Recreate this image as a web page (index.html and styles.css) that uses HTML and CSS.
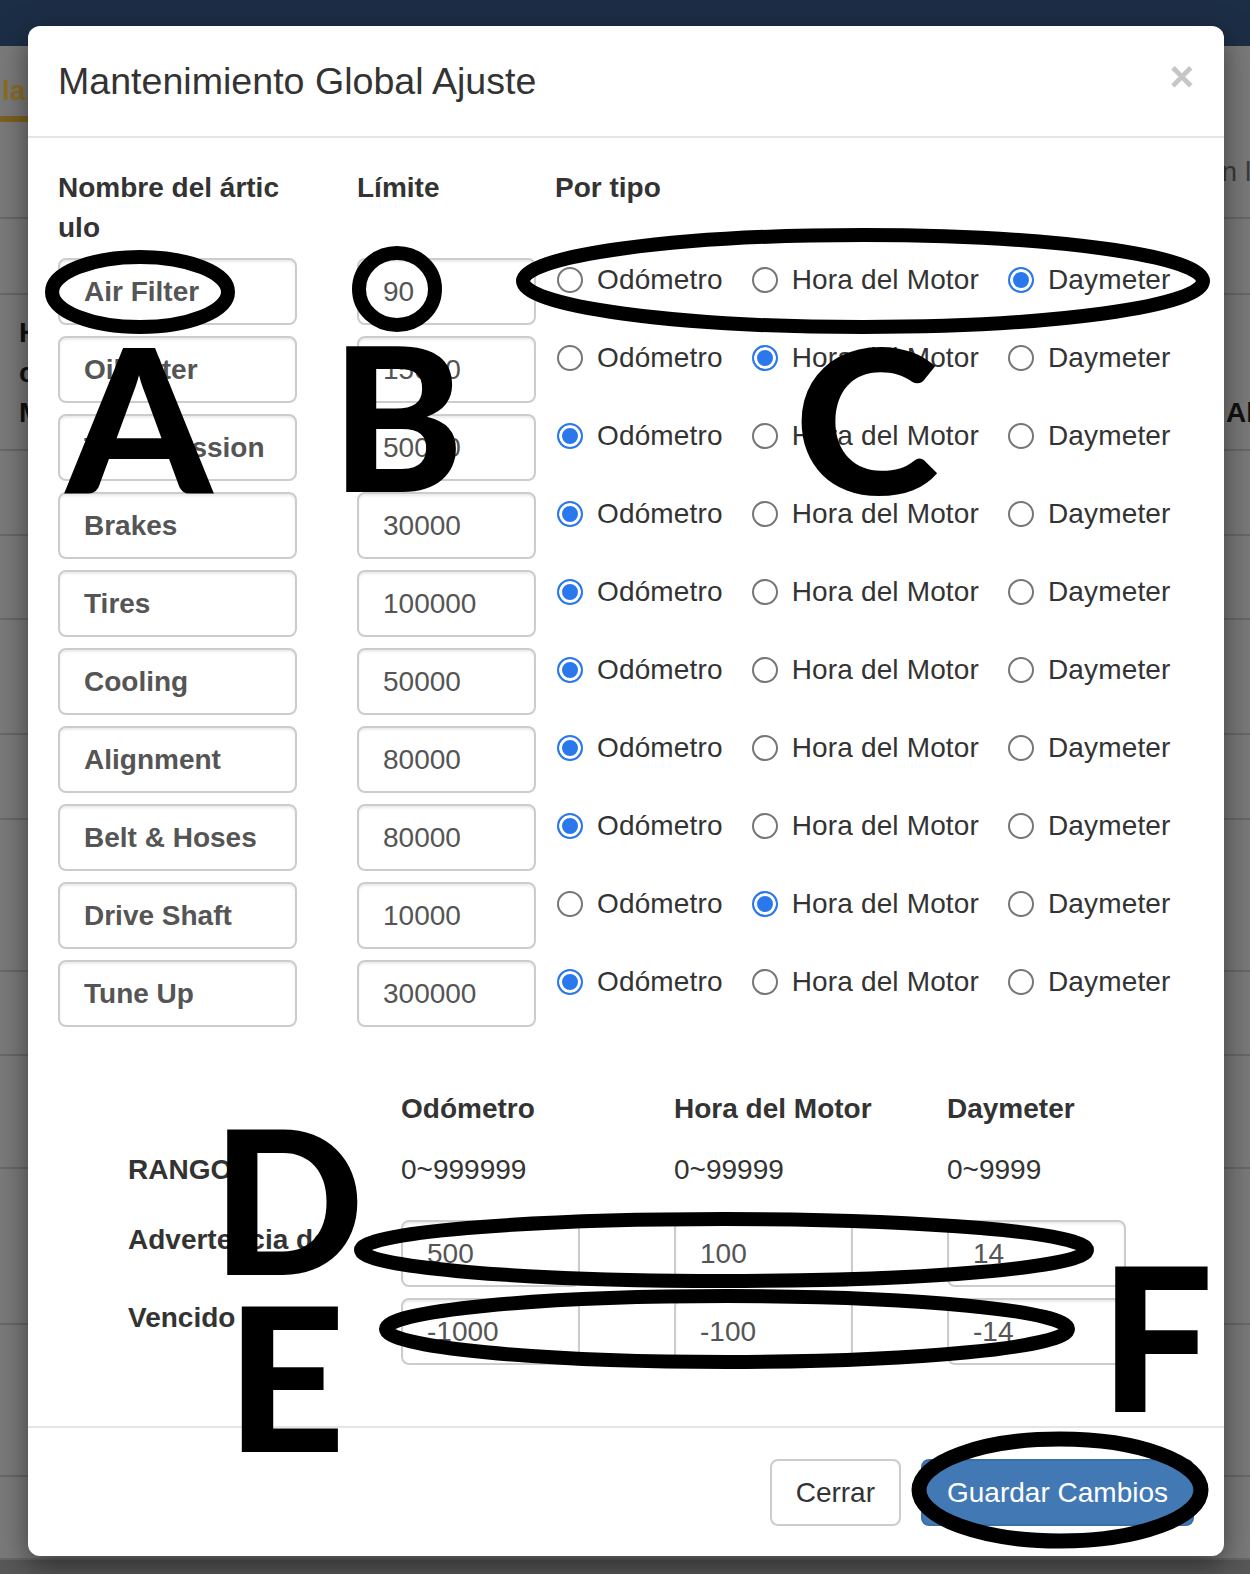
FILE: index.html
```html
<!DOCTYPE html>
<html lang="es">
<head>
    <meta charset="UTF-8">
    <meta name="viewport" content="width=device-width, initial-scale=1.0">
    <title>Mantenimiento Global Ajuste</title>
    <link rel="stylesheet" href="styles.css">
</head>
<body>
    <!-- pagina de fondo, tapada por el modal -->
    <div class="navbar"></div>
    <div class="bg-table">
        <div class="bg-row"><span class="tab-active">Plantilla</span><span class="bg-right">en la lista</span></div>
        <div class="bg-row"></div>
        <div class="bg-row"><span class="bg-left">Hora<br>cada<br>Motor</span><span class="bg-right bold"><br><br>Alignment</span></div>
        <div class="bg-row"></div>
        <div class="bg-row"></div>
        <div class="bg-row"></div>
        <div class="bg-row"></div>
        <div class="bg-row"></div>
        <div class="bg-row"></div>
        <div class="bg-row"></div>
        <div class="bg-row"></div>
        <div class="bg-row"></div>
        <div class="bg-row"></div>
    </div>
    <div class="bg-bottom"></div>

    <div class="modal">
        <div class="modal-header">
            <h4 class="modal-title">Mantenimiento Global Ajuste</h4>
            <button class="close">×</button>
        </div>

        <div class="modal-body">
            <div class="item-row heads">
                <label class="col-head name">Nombre del árticulo</label>
                <label class="col-head">Límite</label>
                <label class="col-head">Por tipo</label>
            </div>

            <div class="item-row">
                <input class="field field-name" value="Air Filter" readonly>
                <input class="field field-limit" value="90" readonly>
                <div class="types">
                    <label class="opt"><input type="radio" name="t1">Odómetro</label>
                    <label class="opt"><input type="radio" name="t1">Hora del Motor</label>
                    <label class="opt"><input type="radio" name="t1" checked>Daymeter</label>
                </div>
            </div>
            <div class="item-row">
                <input class="field field-name" value="Oil Filter" readonly>
                <input class="field field-limit" value="15000" readonly>
                <div class="types">
                    <label class="opt"><input type="radio" name="t2">Odómetro</label>
                    <label class="opt"><input type="radio" name="t2" checked>Hora del Motor</label>
                    <label class="opt"><input type="radio" name="t2">Daymeter</label>
                </div>
            </div>
            <div class="item-row">
                <input class="field field-name" value="Transmission" readonly>
                <input class="field field-limit" value="50000" readonly>
                <div class="types">
                    <label class="opt"><input type="radio" name="t3" checked>Odómetro</label>
                    <label class="opt"><input type="radio" name="t3">Hora del Motor</label>
                    <label class="opt"><input type="radio" name="t3">Daymeter</label>
                </div>
            </div>
            <div class="item-row">
                <input class="field field-name" value="Brakes" readonly>
                <input class="field field-limit" value="30000" readonly>
                <div class="types">
                    <label class="opt"><input type="radio" name="t4" checked>Odómetro</label>
                    <label class="opt"><input type="radio" name="t4">Hora del Motor</label>
                    <label class="opt"><input type="radio" name="t4">Daymeter</label>
                </div>
            </div>
            <div class="item-row">
                <input class="field field-name" value="Tires" readonly>
                <input class="field field-limit" value="100000" readonly>
                <div class="types">
                    <label class="opt"><input type="radio" name="t5" checked>Odómetro</label>
                    <label class="opt"><input type="radio" name="t5">Hora del Motor</label>
                    <label class="opt"><input type="radio" name="t5">Daymeter</label>
                </div>
            </div>
            <div class="item-row">
                <input class="field field-name" value="Cooling" readonly>
                <input class="field field-limit" value="50000" readonly>
                <div class="types">
                    <label class="opt"><input type="radio" name="t6" checked>Odómetro</label>
                    <label class="opt"><input type="radio" name="t6">Hora del Motor</label>
                    <label class="opt"><input type="radio" name="t6">Daymeter</label>
                </div>
            </div>
            <div class="item-row">
                <input class="field field-name" value="Alignment" readonly>
                <input class="field field-limit" value="80000" readonly>
                <div class="types">
                    <label class="opt"><input type="radio" name="t7" checked>Odómetro</label>
                    <label class="opt"><input type="radio" name="t7">Hora del Motor</label>
                    <label class="opt"><input type="radio" name="t7">Daymeter</label>
                </div>
            </div>
            <div class="item-row">
                <input class="field field-name" value="Belt &amp; Hoses" readonly>
                <input class="field field-limit" value="80000" readonly>
                <div class="types">
                    <label class="opt"><input type="radio" name="t8" checked>Odómetro</label>
                    <label class="opt"><input type="radio" name="t8">Hora del Motor</label>
                    <label class="opt"><input type="radio" name="t8">Daymeter</label>
                </div>
            </div>
            <div class="item-row">
                <input class="field field-name" value="Drive Shaft" readonly>
                <input class="field field-limit" value="10000" readonly>
                <div class="types">
                    <label class="opt"><input type="radio" name="t9">Odómetro</label>
                    <label class="opt"><input type="radio" name="t9" checked>Hora del Motor</label>
                    <label class="opt"><input type="radio" name="t9">Daymeter</label>
                </div>
            </div>
            <div class="item-row">
                <input class="field field-name" value="Tune Up" readonly>
                <input class="field field-limit" value="300000" readonly>
                <div class="types">
                    <label class="opt"><input type="radio" name="t10" checked>Odómetro</label>
                    <label class="opt"><input type="radio" name="t10">Hora del Motor</label>
                    <label class="opt"><input type="radio" name="t10">Daymeter</label>
                </div>
            </div>

            <div class="limits">
                <div class="limits-row limits-head">
                    <span></span>
                    <span>Odómetro</span>
                    <span>Hora del Motor</span>
                    <span>Daymeter</span>
                </div>
                <div class="limits-row limits-range">
                    <span class="row-label">RANGO</span>
                    <span>0~999999</span>
                    <span>0~99999</span>
                    <span>0~9999</span>
                </div>
                <div class="limits-row limits-input">
                    <span class="row-label">Advertencia de</span>
                    <input class="field field-limit" value="500" readonly>
                    <input class="field field-limit" value="100" readonly>
                    <input class="field field-limit" value="14" readonly>
                </div>
                <div class="limits-row limits-input">
                    <span class="row-label">Vencido</span>
                    <input class="field field-limit" value="-1000" readonly>
                    <input class="field field-limit" value="-100" readonly>
                    <input class="field field-limit" value="-14" readonly>
                </div>
            </div>
        </div>

        <div class="modal-footer">
            <button class="btn btn-default">Cerrar</button>
            <button class="btn btn-primary">Guardar Cambios</button>
        </div>
    </div>

    <!-- marcas dibujadas encima de la captura -->
    <svg class="marks" viewBox="0 0 1250 1574" width="1250" height="1574">
        <ellipse cx="140" cy="292" rx="88" ry="35"/>
        <ellipse cx="397" cy="289" rx="38" ry="36"/>
        <ellipse cx="863" cy="281" rx="340" ry="46"/>
        <ellipse cx="724" cy="1250" rx="363" ry="31"/>
        <ellipse cx="727" cy="1329" rx="341" ry="33"/>
        <ellipse class="thick" cx="1060" cy="1490" rx="141" ry="51"/>
        <text transform="translate(66 493) scale(1.04 1)">A</text>
        <text transform="translate(331 492)">B</text>
        <text transform="translate(794 494) scale(1.1 1)">C</text>
        <text transform="translate(212 1275)">D</text>
        <text transform="translate(226 1452) scale(1.04 1)">E</text>
        <text transform="translate(1100 1412)">F</text>
    </svg>
</body>
</html>
```

FILE: styles.css
```css
* {
    box-sizing: border-box;
}

body {
    margin: 0;
    width: 1250px;
    height: 1574px;
    overflow: hidden;
    position: relative;
    background: #7a7a7a;
    font-family: "Liberation Sans", Arial, sans-serif;
    font-size: 28px;
    color: #333;
}

/* fondo */
.navbar {
    height: 46px;
    background: #1c2e46;
}

.bg-table {
    display: grid;
    grid-template-rows: 173px 76px 156px 85px 84px 115px 85px 152px 84px 113px 156px 152px 83px;
}

.bg-row {
    display: grid;
    grid-template-columns: 1207px auto;
    padding-left: 19px;
    border-bottom: 2px solid #686868;
    white-space: nowrap;
    line-height: 40px;
}

.bg-row:first-child {
    padding-left: 0;
    grid-template-columns: 1206px auto;
}

.bg-bottom {
    height: 20px;
    background: #585858;
}

.tab-active {
    margin: 20px 0 0 -82px;
    width: 240px;
    line-height: 50px;
    height: 56px;
    font-weight: bold;
    color: #8c6d22;
    border-bottom: 6px solid #7d6020;
}

.bg-left {
    font-weight: bold;
    color: #111;
    padding-top: 18px;
}

.bg-right {
    color: #3a3a3a;
    padding-top: 106px;
}

.bg-right.bold {
    font-weight: bold;
    color: #111;
    padding-top: 18px;
}

/* modal */
.modal {
    position: absolute;
    top: 26px;
    left: 28px;
    width: 1196px;
    background: #fff;
    border-radius: 12px;
    box-shadow: 0 10px 30px rgba(0, 0, 0, 0.5);
}

.modal-header {
    display: flex;
    justify-content: space-between;
    align-items: flex-start;
    padding: 30px;
    border-bottom: 2px solid #e5e5e5;
}

.modal-title {
    margin: 0;
    font-size: 37.6px;
    line-height: 50px;
    font-weight: normal;
    color: #333;
}

.close {
    padding: 0;
    margin: 0;
    border: 0;
    background: none;
    font-family: inherit;
    font-size: 42px;
    font-weight: bold;
    line-height: 1;
    color: #c6c6c6;
}

.modal-body {
    padding: 30px 30px 61px;
}

.item-row {
    display: grid;
    grid-template-columns: 299px 198px 1fr;
    margin-bottom: 11px;
}

.item-row.heads {
    margin-bottom: 10px;
}

.col-head {
    font-weight: bold;
    line-height: 40px;
}

.col-head.name {
    width: 232px;
    word-break: break-all;
}

.field {
    height: 67px;
    padding: 0 24px;
    border: 2px solid #ccc;
    border-radius: 8px;
    box-shadow: inset 0 2px 2px rgba(0, 0, 0, 0.075);
    font-family: inherit;
    font-size: 28px;
    color: #555;
    background: #fff;
    outline: none;
}

.field-name {
    width: 239px;
    font-weight: bold;
}

.field-limit {
    width: 179px;
}

.types {
    display: flex;
    align-items: center;
    gap: 29px;
    height: 40px;
    margin-top: 2px;
    padding-left: 2px;
}

.opt {
    display: flex;
    align-items: center;
    white-space: nowrap;
    line-height: 40px;
    letter-spacing: 0.15px;
}

.opt input {
    -webkit-appearance: none;
    appearance: none;
    flex: none;
    width: 26px;
    height: 26px;
    margin: 0 14px 0 0;
    border: 2px solid #767676;
    border-radius: 50%;
    background: #fff;
}

.opt input:checked {
    border-color: #2a78ec;
    background: #2a78ec;
    box-shadow: inset 0 0 0 3px #fff;
}

/* tabla de rangos */
.limits {
    margin: 62px 0 0 70px;
}

.limits-row {
    display: grid;
    grid-template-columns: repeat(4, 273px);
    line-height: 40px;
    white-space: nowrap;
}

.limits-head {
    font-weight: bold;
    margin-bottom: 21px;
}

.limits-range {
    margin-bottom: 30px;
}

.limits-input {
    align-items: start;
    margin-bottom: 11px;
}

.limits-input:last-child {
    margin-bottom: 0;
}

.row-label {
    font-weight: bold;
}

.modal-footer {
    display: flex;
    justify-content: flex-end;
    gap: 20px;
    padding: 31px 30px 30px;
    border-top: 2px solid #e5e5e5;
}

.btn {
    height: 67px;
    padding: 0 24px;
    border: 2px solid;
    border-radius: 8px;
    font-family: inherit;
    font-size: 28px;
}

.btn-default {
    background: #fff;
    border-color: #ccc;
    color: #333;
}

.btn-primary {
    background: #4279b5;
    border-color: #3b6fa7;
    color: #fff;
}

/* anotaciones */
.marks {
    position: absolute;
    top: 0;
    left: 0;
    pointer-events: none;
}

.marks ellipse {
    fill: none;
    stroke: #000;
    stroke-width: 14;
}

.marks ellipse.thick {
    stroke-width: 15;
}

.marks text {
    font-family: "Lato", "DejaVu Sans", sans-serif;
    font-weight: 900;
    font-size: 200px;
    fill: #000;
}
```
